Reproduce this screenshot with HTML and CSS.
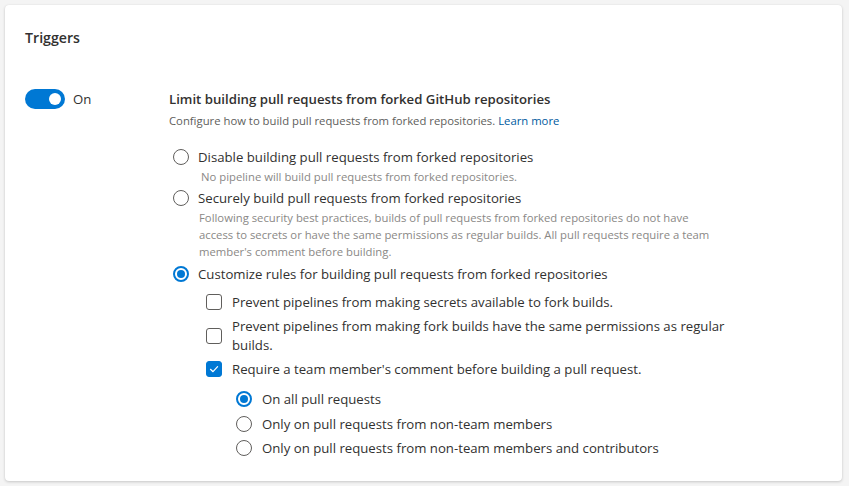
FILE: index.html
```html
<!DOCTYPE html>
<html>
<head>
<meta charset="utf-8">
<link rel="stylesheet" href="styles.css">
</head>
<body>
<div class="card">
  <div class="title">Triggers</div>
  <div class="section">
    <div class="toggle-col">
      <span class="toggle"><span class="knob"></span></span>
      <span class="toggle-label">On</span>
    </div>
    <div class="content">
      <div class="heading">Limit building pull requests from forked GitHub repositories</div>
      <div class="sub">Configure how to build pull requests from forked repositories. <a class="link">Learn more</a></div>
      <div class="options">
        <div class="row"><span class="radio"></span><span class="label">Disable building pull requests from forked repositories</span></div>
        <div class="desc">No pipeline will build pull requests from forked repositories.</div>
        <div class="row row-secure"><span class="radio"></span><span class="label">Securely build pull requests from forked repositories</span></div>
        <div class="desc desc-multi">Following security best practices, builds of pull requests from forked repositories do not have access to secrets or have the same permissions as regular builds. All pull requests require a team member's comment before building.</div>
        <div class="row row-custom"><span class="radio checked"></span><span class="label">Customize rules for building pull requests from forked repositories</span></div>
        <div class="checks">
          <div class="crow"><span class="check"></span><span class="label">Prevent pipelines from making secrets available to fork builds.</span></div>
          <div class="crow crow-wrap"><span class="check"></span><span class="label">Prevent pipelines from making fork builds have the same permissions as regular builds.</span></div>
          <div class="crow"><span class="check checked"><svg viewBox="0 0 16 16" width="16" height="16"><path d="M4.5 8.3 L7 10.7 L11.6 5.6" fill="none" stroke="#fff" stroke-width="1.2" stroke-linecap="round" stroke-linejoin="round"/></svg></span><span class="label">Require a team member's comment before building a pull request.</span></div>
          <div class="subradios">
            <div class="row srow"><span class="radio"></span><span class="label">On all pull requests</span></div>
            <div class="row srow"><span class="radio"></span><span class="label">Only on pull requests from non-team members</span></div>
            <div class="row srow"><span class="radio"></span><span class="label">Only on pull requests from non-team members and contributors</span></div>
          </div>
        </div>
      </div>
    </div>
  </div>
</div>
</body>
</html>
```
FILE: styles.css
```css
* { box-sizing: border-box; }
html, body { margin: 0; padding: 0; }
body {
  background: #f4f4f4;
  font-family: "Open Sans", "Noto Sans", sans-serif;
  color: #323130;
  font-size: 13.2px;
  padding: 5px 7px 5px 5px;
}
.card {
  background: #fff;
  border-radius: 4px;
  box-shadow: 0 1px 3px rgba(0,0,0,0.18), 0 0 1px rgba(0,0,0,0.08);
  height: 476px;
  padding: 23px 20px 0 20px;
}
.title {
  font-size: 14.2px;
  font-weight: 600;
  line-height: 20px;
}
.section {
  display: flex;
  margin-top: 41px;
}
.toggle-col {
  width: 144px;
  display: flex;
  align-items: center;
  height: 20px;
  flex-shrink: 0;
}
.toggle {
  width: 40px;
  height: 20px;
  border-radius: 10px;
  background: #0078d4;
  position: relative;
  display: inline-block;
}
.knob {
  position: absolute;
  width: 12px;
  height: 12px;
  border-radius: 50%;
  background: #fff;
  top: 4px;
  right: 4px;
}
.toggle-label {
  margin-left: 8px;
  line-height: 20px;
}
.content { flex: 1; }
.heading {
  font-weight: 600;
  line-height: 20px;
}
.sub {
  font-size: 11.3px;
  line-height: 16px;
  color: #605e5c;
  margin-top: 4px;
}
.link { color: #005a9e; }
.options {
  margin-top: 16px;
  width: 560px;
}
.row {
  display: flex;
  align-items: center;
  height: 24px;
}
.radio {
  width: 16px;
  height: 16px;
  border-radius: 50%;
  border: 1px solid #605e5c;
  margin-left: 4px;
  margin-right: 9px;
  flex-shrink: 0;
  position: relative;
}
.radio.checked, .srow:first-child .radio {
  border: 2px solid #0078d4;
}
.radio.checked::after, .srow:first-child .radio::after {
  content: "";
  position: absolute;
  left: 2px;
  top: 2px;
  width: 8px;
  height: 8px;
  border-radius: 50%;
  background: #0078d4;
}
.label { line-height: 20px; }
.desc {
  font-size: 11.3px;
  line-height: 16px;
  color: #8a8886;
  padding-left: 32px;
}
.desc-multi {
  line-height: 17px;
  margin-top: -1px;
  padding-left: 30px;
  width: 550px;
}
.row-secure { margin-top: 1px; }
.row-custom { margin-top: 2px; }
.checks {
  padding-left: 34px;
  margin-top: 4px;
}
.crow {
  display: flex;
  align-items: center;
  padding: 2px 0;
}
.crow-wrap { margin-top: 1px; }
.crow-wrap .label { line-height: 19px; }
.check {
  width: 16px;
  height: 16px;
  border: 1px solid #605e5c;
  border-radius: 3px;
  margin-left: 3px;
  margin-right: 10px;
  flex-shrink: 0;
  display: flex;
}
.check.checked {
  background: #0078d4;
  border-color: #0078d4;
}
.check.checked svg { margin: -1px; }
.subradios {
  margin-top: 6px;
  padding-left: 29px;
}
.srow { height: 24.5px; }
.srow .radio { margin-right: 10px; }
```
